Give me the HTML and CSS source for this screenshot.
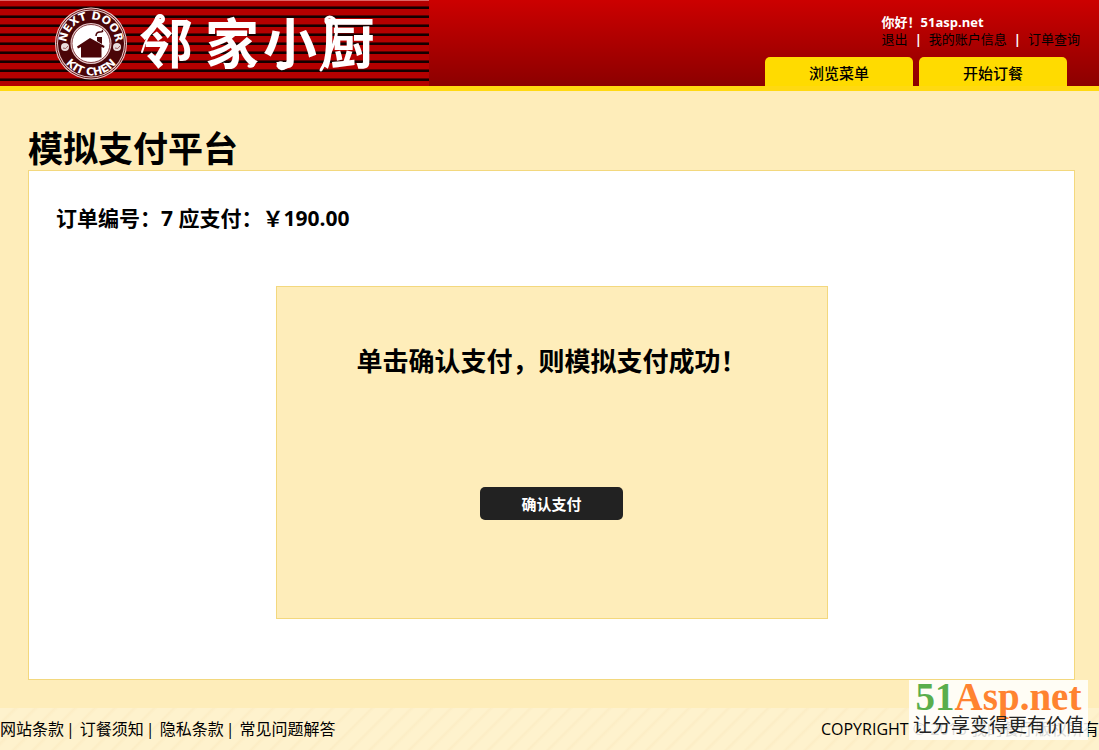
FILE: index.html
```html
<!DOCTYPE html>
<html lang="zh-CN">
<head>
    <meta charset="utf-8">
    <title>模拟支付平台</title>
    <link rel="stylesheet" href="styles.css">
</head>
<body>
    <header class="header">
        <svg class="logo" width="429" height="86" viewBox="0 0 429 86" role="img" aria-label="邻家小厨">
            <defs>
                <pattern id="stripes" width="429" height="9" patternUnits="userSpaceOnUse">
                    <rect width="429" height="9" fill="#b40000"/>
                    <rect y="6" width="429" height="3" fill="#5a0000"/>
                    <rect y="7" width="429" height="2" fill="#140000"/>
                </pattern>
                <path id="arcTop" d="M66.500 44a24.500 24.500 0 0 1 49 0"/>
                <path id="arcBottom" d="M58.500 43a32.500 32.500 0 0 0 65 0"/>
            </defs>
            <rect width="429" height="86" fill="url(#stripes)"/>
            <rect y="81" width="429" height="5" fill="#b40000"/>
            <rect width="429" height="1" fill="#dd6666"/>
            <circle cx="91" cy="43.500" r="36" fill="#e9cccc"/>
            <circle cx="91" cy="43.500" r="34.500" fill="none" stroke="#6a1515" stroke-width="1"/>
            <circle cx="91" cy="43.500" r="33" fill="#4a0508"/>
            <circle cx="91" cy="43.500" r="20.500" fill="#e9cccc"/>
            <circle cx="91" cy="43.500" r="19" fill="#fff" stroke="#8a4548" stroke-width="1"/>
            <path d="M77 46.500L90 38l14.500 8-.5 2-2.500-1v10.500H81V47l-3 1.500z" fill="#4a0508"/>
            <path d="M97 37h5v7l-5-3z" fill="#4a0508"/>
            <path d="M96 36q0-4 4-4q4 0 2-2" fill="none" stroke="#4a0508" stroke-width="1.500"/>
            <circle cx="65" cy="47" r="4" fill="#e8dcdc"/>
            <circle cx="117" cy="47" r="4" fill="#e8dcdc"/>
            <path d="M63 48q3 2 5-2M115 48q3 2 5-2" fill="none" stroke="#9a6060"/>
            <text class="badge-text"><textPath href="#arcTop" startOffset="50%">NEXT DOOR</textPath></text>
            <text class="badge-text"><textPath href="#arcBottom" startOffset="50%">KIT CHEN</textPath></text>
            <text class="brand-text" y="64"><tspan x="166">邻</tspan><tspan x="232">家</tspan><tspan x="290">小</tspan><tspan x="348">厨</tspan></text>
            <!-- brush flourishes on the lettering -->
            <g fill="none" stroke="#fff" stroke-linecap="round">
                <path d="M155 28Q146 37 142 52" stroke-width="2"/>
                <circle cx="160" cy="19" r="3" stroke-width="4"/>
                <path d="M249 66q5 1 5-4q-1-3-4-1" stroke-width="3"/>
                <path d="M286 67q-5 4-8-1q0-4 4-3" stroke-width="3"/>
                <path d="M331 25q-6-1-5-6q3-4 8 0q6 11-2 29q-4 11-11 22" stroke-width="3"/>
            </g>
        </svg>
        <div class="header-right">
            <div class="user-info">
                <div class="hello">你好！51asp.net</div>
                <div class="user-links">
                    <a href="#">退出</a><span>|</span><a href="#">我的账户信息</a><span>|</span><a href="#">订单查询</a>
                </div>
            </div>
            <nav class="tabs">
                <a href="#">浏览菜单</a>
                <a href="#">开始订餐</a>
            </nav>
        </div>
    </header>

    <main class="main">
        <h1>模拟支付平台</h1>
        <div class="panel">
            <h2>订单编号：7 应支付：￥190.00</h2>
            <form class="pay-box">
                <h3>单击确认支付，则模拟支付成功！</h3>
                <button type="button">确认支付</button>
            </form>
        </div>
    </main>

    <footer class="footer">
        <div class="footer-links">
            <a href="#">网站条款</a><span>|</span><a href="#">订餐须知</a><span>|</span><a href="#">隐私条款</a><span>|</span><a href="#">常见问题解答</a>
        </div>
        <div class="copyright">COPYRIGHT © 2013 我的餐厅版权所有</div>
    </footer>

    <div class="watermark">
        <div class="watermark-name"><span>51</span>Asp.net</div>
        <div class="watermark-slogan">让分享变得更有价值</div>
    </div>
</body>
</html>
```
FILE: styles.css
```css
* {
    box-sizing: border-box;
}

body {
    margin: 0;
    min-height: 100vh;
    display: flex;
    flex-direction: column;
    background-color: #feedba;
    color: #000;
    font-family: "Open Sans", "Noto Sans CJK SC", sans-serif;
    font-size: 15px;
}

a {
    color: inherit;
    text-decoration: none;
}

h1, h2, h3 {
    margin: 0;
    font-weight: bold;
}

/* header */
.header {
    display: flex;
    justify-content: space-between;
    border-bottom: 5px solid #ffd911;
    background: linear-gradient(#cc0000, #8c0000);
}

.logo {
    display: block;
}

.badge-text {
    font-family: "DejaVu Sans", sans-serif;
    font-size: 11px;
    font-weight: bold;
    fill: #fff;
    text-anchor: middle;
}

.brand-text {
    font-family: "Noto Sans CJK SC", sans-serif;
    font-size: 54px;
    font-weight: bold;
    fill: #fff;
    text-anchor: middle;
}

.header-right {
    display: flex;
    flex-direction: column;
    justify-content: space-between;
    align-items: flex-end;
    padding: 14px 19px 0 0;
}

.user-info {
    font-size: 13px;
    line-height: 17px;
    white-space: nowrap;
}

.hello {
    color: #fff;
    font-weight: bold;
}

.user-links {
    display: flex;
    gap: 7px;
}

.user-links span {
    color: #fff;
    font-weight: bold;
}

.tabs {
    display: flex;
    gap: 6px;
    padding-right: 13px;
}

.tabs a {
    width: 148px;
    padding-top: 3px;
    border-radius: 5px 5px 0 0;
    background-color: #ffdb00;
    font-weight: 500;
    line-height: 26px;
    text-align: center;
}

/* content */
.main {
    flex: 1;
    padding: 37px 24px 28px 28px;
}

.main h1 {
    font-size: 35px;
    line-height: 42px;
}

.panel {
    padding: 31px 27px 60px;
    border: 1px solid #f3d87e;
    background-color: #fff;
}

.panel h2 {
    font-size: 21px;
    line-height: 32px;
}

.pay-box {
    display: flex;
    flex-direction: column;
    align-items: center;
    max-width: 552px;
    margin: 52px auto 0;
    padding: 56px 20px 98px;
    border: 1px solid #f3d87e;
    background-color: #feedba;
}

.pay-box h3 {
    font-size: 26px;
    line-height: 36px;
}

.pay-box button {
    width: 143px;
    height: 33px;
    margin-top: 108px;
    border: 0;
    border-radius: 5px;
    background-color: #222;
    color: #fff;
    font-family: inherit;
    font-size: 15px;
    font-weight: bold;
    cursor: pointer;
}

/* footer */
.footer {
    display: flex;
    justify-content: space-between;
    font-size: 16px;
    line-height: 42px;
    white-space: nowrap;
    background: repeating-linear-gradient(135deg, #fef2cd 0, #fef2cd 9px, #fcedc5 11px, #fef2cd 14px);
}

.footer-links {
    display: flex;
}

.footer-links span {
    margin: 0 5px 0 2px;
}

/* watermark lies over the page corner */
.watermark {
    position: absolute;
    right: 11px;
    bottom: 10px;
    width: 179px;
    height: 60px;
    background-color: rgba(255, 255, 255, 0.85);
    text-align: center;
    white-space: nowrap;
}

.watermark-name {
    color: #ff8330;
    font-family: "Liberation Serif", serif;
    font-size: 39px;
    font-weight: bold;
    line-height: 34px;
}

.watermark-name span {
    color: #5aae4c;
}

.watermark-slogan {
    color: #222;
    font-size: 19px;
    line-height: 22px;
}
```
